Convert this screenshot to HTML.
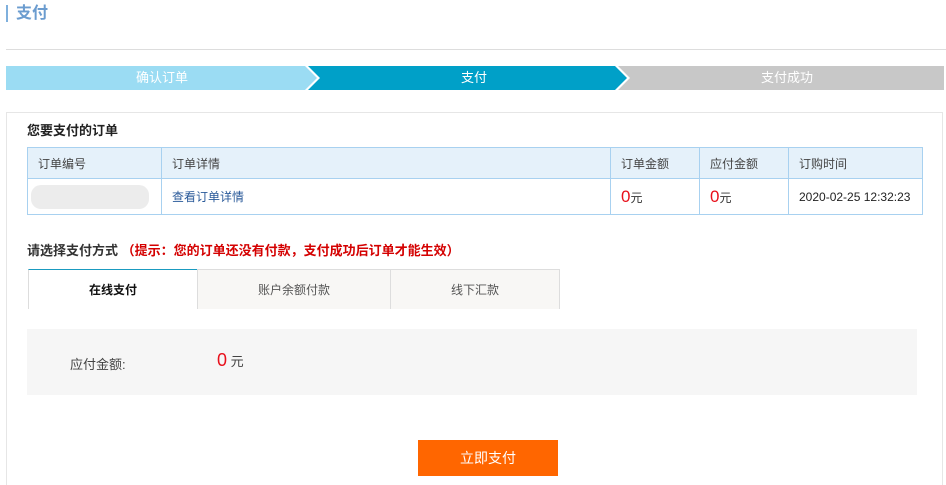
<!DOCTYPE html>
<html><head><meta charset="utf-8"><style>
*{margin:0;padding:0;box-sizing:border-box}
html,body{width:946px;height:485px;overflow:hidden}
body{background:#fff;font-family:"Liberation Sans","Noto Sans CJK SC",sans-serif;font-size:12px;color:#333;position:relative}
.a{position:absolute}
.title{left:6px;top:5px;height:17px;border-left:2px solid #7fb0dd;padding-left:8px;font-size:16px;font-weight:bold;color:#6b9ccf;line-height:17px}
.hr{left:6px;top:49px;width:940px;height:1px;background:#ddd}
.steps{left:6px;top:66px;width:938px;height:24px}
.st{position:absolute;top:0;height:24px;line-height:24px;color:#fff;font-size:13px;text-align:center}
table{border-collapse:collapse;position:absolute;left:27px;top:147px;width:896px}
td{border:1px solid #a8d1f0;padding-left:10px;font-size:12px}
tr.h td{background:#e5f1fa;height:31px;color:#444}
tr.r td{height:36px}
.red{color:#e8101b}
.tab{position:absolute;top:269px;height:40px;line-height:40px;text-align:center;background:#f8f7f5;border:1px solid #ddd;border-bottom:none;color:#555;font-size:12px}
</style></head><body>
<div class="a title">支付</div>
<div class="a hr"></div>
<div class="a steps">
<svg width="938" height="24" style="position:absolute;left:0;top:0">
<rect x="0" y="0" width="938" height="24" fill="#c8c8c8"/>
<polygon points="0,0 612,0 624,12 612,24 0,24" fill="#fff"/>
<polygon points="0,0 609,0 621,12 609,24 0,24" fill="#00a0c8"/>
<polygon points="0,0 302,0 314,12 302,24 0,24" fill="#fff"/>
<polygon points="0,0 299,0 311,12 299,24 0,24" fill="#9bdcf3"/>
</svg>
<div class="st" style="left:0;width:312px">确认订单</div>
<div class="st" style="left:312px;width:312px">支付</div>
<div class="st" style="left:624px;width:314px">支付成功</div>
</div>
<div class="a" style="left:6px;top:112px;width:937px;height:373px;border:1px solid #e6e6e6;border-bottom:none"></div>
<div class="a" style="left:27px;top:120px;font-size:13px;font-weight:bold;color:#222">您要支付的订单</div>
<table>
<tr class="h"><td style="width:134px">订单编号</td><td style="width:449px">订单详情</td><td style="width:89px">订单金额</td><td style="width:89px">应付金额</td><td>订购时间</td></tr>
<tr class="r"><td><div style="width:118px;height:24px;background:#ececec;border-radius:10px;margin-left:-7px"></div></td><td style="color:#2a5a9a">查看订单详情</td><td><span class="red" style="font-size:17px">0</span>元</td><td><span class="red" style="font-size:17px">0</span>元</td><td style="color:#222">2020-02-25 12:32:23</td></tr>
</table>
<div class="a" style="left:27px;top:240px;font-size:13px;font-weight:bold;color:#333">请选择支付方式 <span style="color:#d40000">（提示：您的订单还没有付款，支付成功后订单才能生效）</span></div>
<div class="tab" style="left:28px;width:170px;background:#fff;border-top:1px solid #1a9bc0;color:#111;font-weight:bold">在线支付</div>
<div class="tab" style="left:197px;width:194px">账户余额付款</div>
<div class="tab" style="left:390px;width:170px">线下汇款</div>
<div class="a" style="left:27px;top:329px;width:890px;height:66px;background:#f6f6f6"></div>
<div class="a" style="left:70px;top:354px;font-size:13px;color:#444">应付金额:</div>
<div class="a" style="left:217px;top:350px;font-size:13px;color:#444"><span class="red" style="font-size:18px">0</span> 元</div>
<div class="a" style="left:418px;top:440px;width:140px;height:36px;background:#ff6600;color:#fff;font-size:14px;text-align:center;line-height:36px">立即支付</div>
</body></html>
